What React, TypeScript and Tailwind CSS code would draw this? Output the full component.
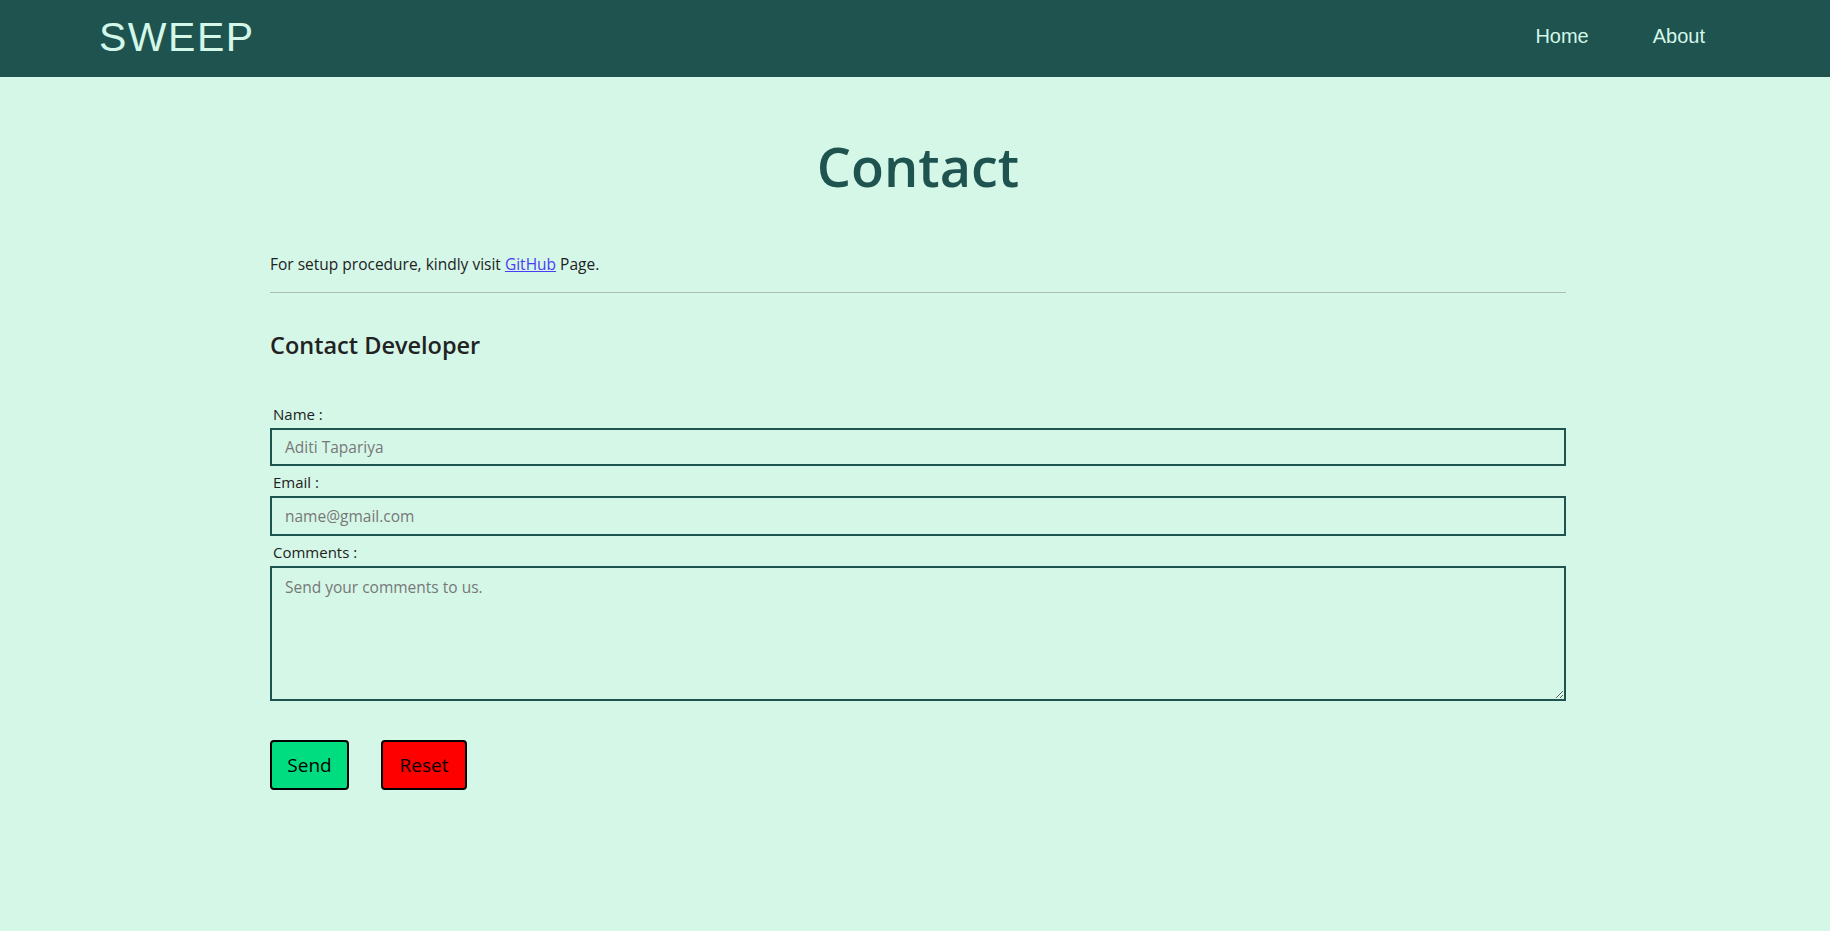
export default function App() {
  return (
    <div className="min-h-[931px] bg-[#d5f7e8]" style={{ fontFamily: '"Open Sans", sans-serif' }}>
      {/* Navbar */}
      <nav className="h-[77px] bg-[#1f5350] flex items-center justify-between pl-[99px] pr-[125px]" style={{ fontFamily: '"Liberation Sans", Arial, sans-serif' }}>
        <span className="text-[41px] leading-none tracking-[1.5px] text-[#d3f7e8] -mt-[2px]">SWEEP</span>
        <div className="flex gap-[64px] text-[20px] text-[#d3f7e8] -mt-[5px]">
          <a href="#">Home</a>
          <a href="#">About</a>
        </div>
      </nav>

      {/* Contact */}
      <main className="ml-[270px] w-[1296px] pb-10">
        <h1 className="text-center text-[54px] font-semibold text-[#1f5350] leading-none pt-[62px]">Contact</h1>

        <p className="mt-[60px] text-[15.5px] text-[#222]">
          For setup procedure, kindly visit <a href="#" className="text-[#4b3cf5] underline">GitHub</a> Page.
        </p>
        <hr className="mt-[16px] border-t border-[#a9bfb5]" />

        <h3 className="mt-[41px] text-[23.5px] font-semibold text-[#222] leading-none">Contact Developer</h3>

        <form className="mt-[46px] flex flex-col text-[15px]">
          <label className="pl-[3px] mb-[4px] text-[#222] leading-[20px]">Name :</label>
          <input
            placeholder="Aditi Tapariya"
            className="h-[38px] border-2 border-[#1f5350] bg-transparent px-[13px] text-[15.5px] placeholder:text-[#777] outline-none"
          />
          <label className="mt-[6px] mb-[4px] pl-[3px] text-[#222] leading-[20px]">Email :</label>
          <input
            placeholder="name@gmail.com"
            className="h-[40px] border-2 border-[#1f5350] bg-transparent px-[13px] text-[15.5px] placeholder:text-[#777] outline-none"
          />
          <label className="mt-[6px] mb-[4px] pl-[3px] text-[#222] leading-[20px]">Comments :</label>
          <textarea
            placeholder="Send your comments to us."
            className="h-[135px] border-2 border-[#1f5350] bg-transparent px-[13px] py-[8px] text-[15.5px] placeholder:text-[#777] outline-none"
          />

          <div className="mt-[39px] flex gap-[32px]">
            <button type="button" className="h-[50px] w-[79px] rounded-[4px] border-2 border-black bg-[#00dd80] text-[19px] text-black">Send</button>
            <button type="reset" className="h-[50px] w-[86px] rounded-[4px] border-2 border-black bg-[#ff0000] text-[19px] text-black">Reset</button>
          </div>
        </form>
      </main>
    </div>
  );
}
